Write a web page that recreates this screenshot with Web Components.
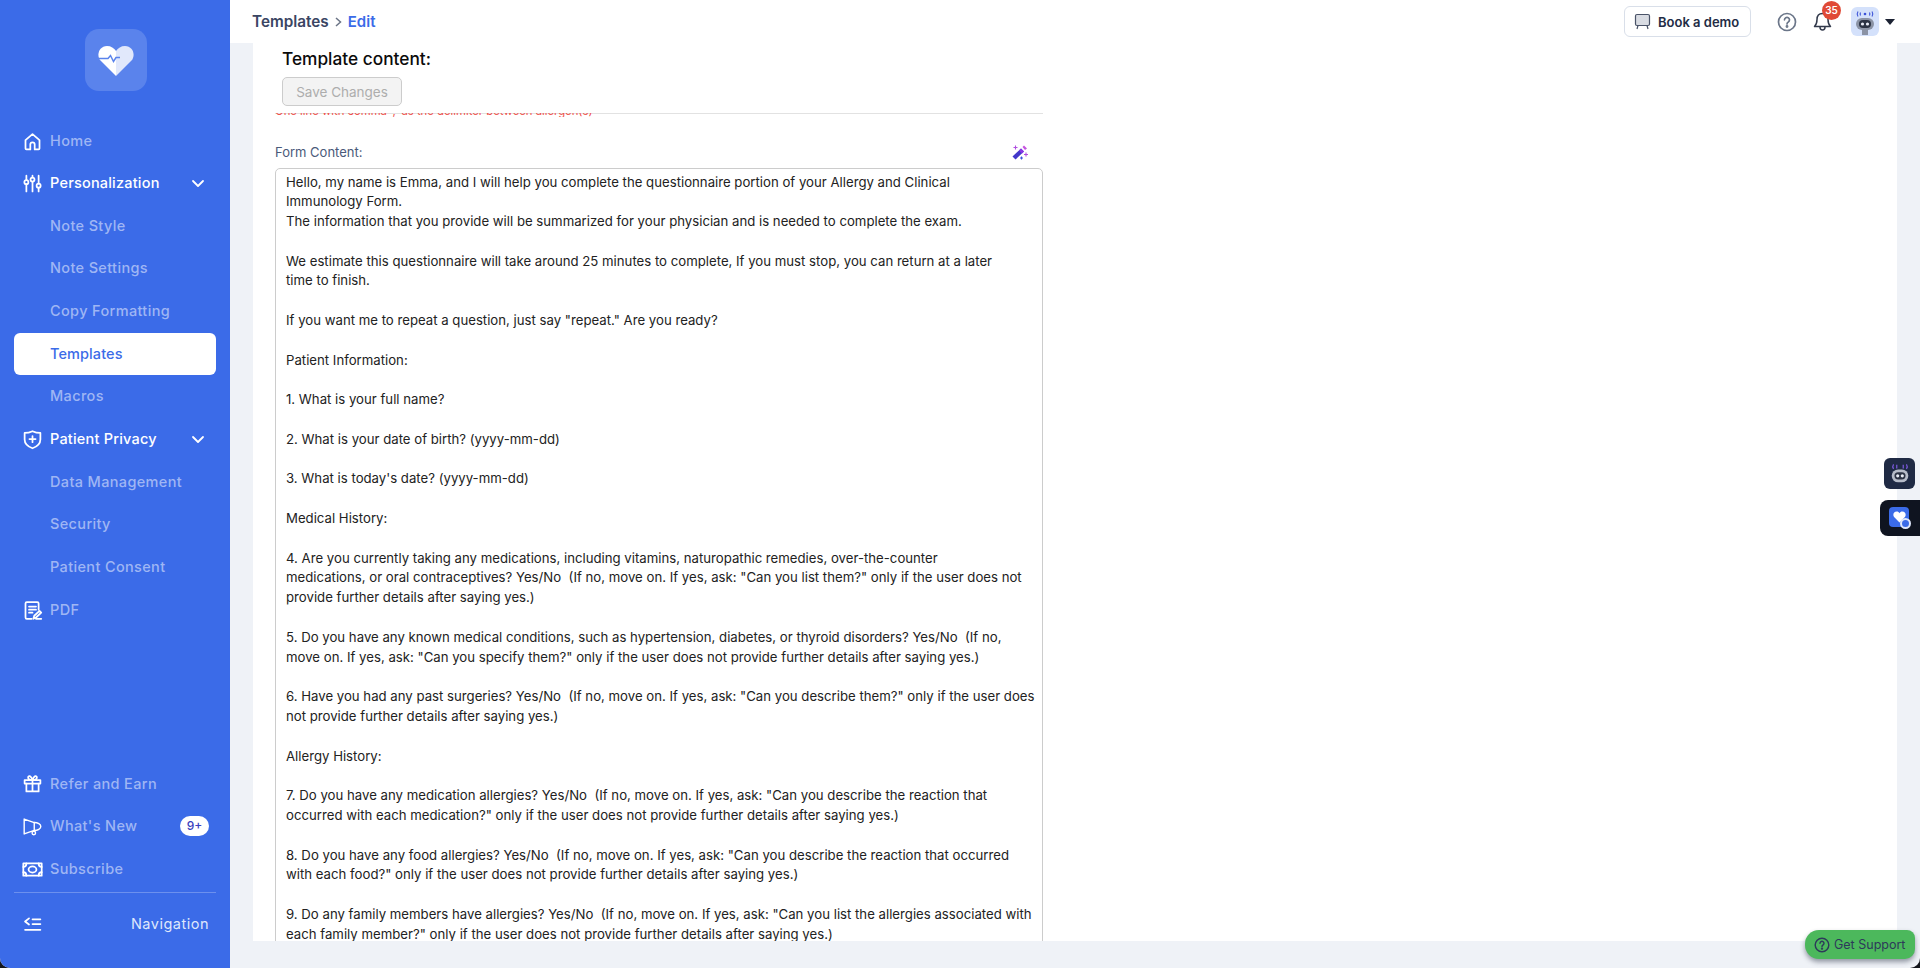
<!DOCTYPE html>
<html>
<head>
<meta charset="utf-8">
<title>Templates</title>
<style>
  html, body { margin: 0; height: 100%; overflow: hidden; background: #14161c; }
  body { font-family: "Inter", "Open Sans", sans-serif; }
</style>
</head>
<body>
<app-shell>
  <side-nav slot="nav"></side-nav>
  <top-bar slot="top"></top-bar>
  <template-editor slot="main">
    <span slot="title">Template content:</span>
    <span slot="save">Save Changes</span>
    <span slot="hint">One line with comma ',' as the delimiter between allergen(s)</span>
    <span slot="label">Form Content:</span>
    <form-text>Hello, my name is Emma, and I will help you complete the questionnaire portion of your Allergy and Clinical
Immunology Form.
The information that you provide will be summarized for your physician and is needed to complete the exam.

We estimate this questionnaire will take around 25 minutes to complete, If you must stop, you can return at a later
time to finish.

If you want me to repeat a question, just say "repeat." Are you ready?

Patient Information:

1. What is your full name?

2. What is your date of birth? (yyyy-mm-dd)

3. What is today's date? (yyyy-mm-dd)

Medical History:

4. Are you currently taking any medications, including vitamins, naturopathic remedies, over-the-counter
medications, or oral contraceptives? Yes/No  (If no, move on. If yes, ask: "Can you list them?" only if the user does not
provide further details after saying yes.)

5. Do you have any known medical conditions, such as hypertension, diabetes, or thyroid disorders? Yes/No  (If no,
move on. If yes, ask: "Can you specify them?" only if the user does not provide further details after saying yes.)

6. Have you had any past surgeries? Yes/No  (If no, move on. If yes, ask: "Can you describe them?" only if the user does
not provide further details after saying yes.)

Allergy History:

7. Do you have any medication allergies? Yes/No  (If no, move on. If yes, ask: "Can you describe the reaction that
occurred with each medication?" only if the user does not provide further details after saying yes.)

8. Do you have any food allergies? Yes/No  (If no, move on. If yes, ask: "Can you describe the reaction that occurred
with each food?" only if the user does not provide further details after saying yes.)

9. Do any family members have allergies? Yes/No  (If no, move on. If yes, ask: "Can you list the allergies associated with
each family member?" only if the user does not provide further details after saying yes.)</form-text>
  </template-editor>
  <float-tools slot="float"></float-tools>
</app-shell>

<script>
const icons = {
  home: `<path d="M4 10.500 12 3.500l8 7V20a1 1 0 0 1-1 1h-4.500v-5.500a2.500 2.500 0 0 0-5 0V21H5a1 1 0 0 1-1-1z"/>`,
  sliders: `<path d="M5 3v5M5 13v8M12 3v2M12 10v11M19 3v9M19 17v4"/><circle cx="5" cy="10.500" r="2.300"/><circle cx="12" cy="7.500" r="2.300"/><circle cx="19" cy="14.500" r="2.300"/>`,
  shield: `<path d="M3 4.500c3.500 0 6-.6 9-2 3 1.400 5.500 2 9 2v7.500c0 4.800-3.500 8-9 10-5.500-2-9-5.200-9-10z"/><path d="M12 8v7M8.500 11.500h7"/>`,
  pdf: `<path d="M19 11V4a1.500 1.500 0 0 0-1.500-1.500h-12A1.500 1.500 0 0 0 4 4v16a1.500 1.500 0 0 0 1.500 1.500H11"/><path d="M8 7.500h8M8 11h8M8 14.500h4"/><path d="M13 21.500l1-3.500 6-5.500 2 2-6 5.500zM16 21.500h6"/>`,
  gift: `<rect x="3" y="8" width="18" height="4"/><path d="M5 12v9h14v-9M12 8v13"/><path d="M12 8C9 8 7 7 7 5s3-3 5 3c2-6 5-5 5-3s-2 3-5 3z"/>`,
  news: `<path d="M2.500 3.500 14 7.500c4 0 7.500 2 7.500 4.500s-3.500 4.500-7.500 4.500L2.500 20.500z" stroke-width="1.600"/><path d="M14 7.500v9" stroke-width="1.600"/><circle cx="13.500" cy="19.500" r="2" stroke-width="1.600"/>`,
  money: `<rect x="1.500" y="5" width="21" height="14"/><ellipse cx="12" cy="12" rx="4.500" ry="3.500"/><path d="M1.500 9c2 0 3.500-1.500 3.500-4M22.500 9c-2 0-3.500-1.500-3.500-4M1.500 15c2 0 3.500 1.500 3.500 4M22.500 15c-2 0-3.500 1.500-3.500 4"/>`,
  collapse: `<path d="M8 5 3.500 8.500 8 12M12 6h9M12 11.500h9M3.500 18h17.500"/>`
}

class AppShell extends HTMLElement {
  constructor() {
    super()
    this._shadowDom = this.attachShadow({mode: "open"})
  }
  connectedCallback() {
    this._shadowDom.innerHTML = `
    <style>
      :host{
        display:grid;
        grid-template-columns:230px 1fr;
        grid-template-rows:43px 1fr;
        height:968px;
        background:#eff2f7;
        border-radius:0 0 10px 10px;
        overflow:hidden;
        position:relative;
      }
      .nav{ grid-row:1 / 3; display:flex; min-height:0; }
      .top{ display:block; }
      .main{ display:flex; min-height:0; padding:0 23px 27px; }
    </style>
    <div class="nav"><slot name="nav"></slot></div>
    <div class="top"><slot name="top"></slot></div>
    <div class="main"><slot name="main"></slot></div>
    <slot name="float"></slot>
    `
  }
}

class SideNav extends HTMLElement {
  constructor() {
    super()
    this._shadowDom = this.attachShadow({mode: "open"})
  }
  connectedCallback() {
    this._shadowDom.innerHTML = `
    <style>
      :host{
        display:flex;
        flex-direction:column;
        flex:1;
        background:#3b6be8;
        padding:29px 14px 22px;
        box-sizing:border-box;
      }
      .logo{
        width:62px; height:62px;
        margin:0 0 28.500px 71px;
        border-radius:14px;
        background:#5a83ec;
        display:flex; align-items:center; justify-content:center;
      }
      .spacer{ flex:1; }
      hr{ border:0; border-top:1px solid rgba(255,255,255,.25); margin:2px 0 10px; width:100%; }
    </style>
    <div class="logo">
      <svg width="38" height="34" viewBox="0 0 38 34">
        <path d="M19 33 3.500 17.500C-1 12.500 2 3 10 3c4 0 7 2 9 5z" fill="#fff"/>
        <path d="M19 33 34.500 17.500C39 12.500 36 3 28 3c-4 0-7 2-9 5z" fill="#e1e8fb"/>
        <path d="M1 15.500h10l2.500-3 3 6 2.500-4h4" fill="none" stroke="#5a83ec" stroke-width="1.500"/>
      </svg>
    </div>
    <nav-item icon="home" label="Home"></nav-item>
    <nav-item icon="sliders" label="Personalization" open></nav-item>
    <nav-item label="Note Style"></nav-item>
    <nav-item label="Note Settings"></nav-item>
    <nav-item label="Copy Formatting"></nav-item>
    <nav-item label="Templates" active></nav-item>
    <nav-item label="Macros"></nav-item>
    <nav-item icon="shield" label="Patient Privacy" open></nav-item>
    <nav-item label="Data Management"></nav-item>
    <nav-item label="Security"></nav-item>
    <nav-item label="Patient Consent"></nav-item>
    <nav-item icon="pdf" label="PDF"></nav-item>
    <div class="spacer"></div>
    <nav-item icon="gift" label="Refer and Earn"></nav-item>
    <nav-item icon="news" label="What's New" badge="9+"></nav-item>
    <nav-item icon="money" label="Subscribe"></nav-item>
    <hr>
    <nav-item icon="collapse" label="Navigation" end></nav-item>
    `
  }
}

class NavItem extends HTMLElement {
  constructor() {
    super()
    this._shadowDom = this.attachShadow({mode: "open"})
  }
  connectedCallback() {
    const icon = this.getAttribute('icon')
    const badge = this.getAttribute('badge')
    const svg = icon ? `<svg width="21" height="21" viewBox="0 0 24 24" fill="none" stroke="#fff" stroke-width="2" stroke-linecap="round" stroke-linejoin="round">${icons[icon]}</svg>` : ''
    const chevron = this.hasAttribute('open') ? `<svg class="chev" width="14" height="9" viewBox="0 0 14 9" fill="none" stroke="#fff" stroke-width="1.800" stroke-linecap="round" stroke-linejoin="round"><path d="M2 2l5 5 5-5"/></svg>` : ''
    this._shadowDom.innerHTML = `
    <style>
      :host{
        display:flex;
        flex:none;
        height:42.650px;
        font:500 14.500px/1 "Inter", sans-serif;
        letter-spacing:.35px;
        color:#9fb6f4;
        box-sizing:border-box;
      }
      :host([open]){ color:#fff; letter-spacing:.2px; }
      :host([active]){ color:#3b6be8; background:#fff; border-radius:6px; letter-spacing:.1px; }
      :host([end]){ color:#dfe7fc; font-weight:400; letter-spacing:.5px; }
      .row{ display:flex; align-items:center; width:100%; position:relative; padding:0 7px 0 36px; box-sizing:border-box; }
      svg{ flex:none; }
      .ic{ position:absolute; left:8px; top:11px; display:flex; }
      .label{ flex:1; white-space:nowrap; }
      :host([end]) .label{ text-align:right; }
      .chev{ margin-right:4px; }
      .badge{ background:#fff; color:#3b3fbe; font-size:12px; border-radius:10px; width:29px; height:20px; display:flex; align-items:center; justify-content:center; letter-spacing:0; }
    </style>
    <div class="row">
      ${svg ? `<span class="ic">${svg}</span>` : ''}
      <span class="label">${this.getAttribute('label')}</span>
      ${chevron}
      ${badge ? `<span class="badge">${badge}</span>` : ''}
    </div>
    `
  }
}

class TopBar extends HTMLElement {
  constructor() {
    super()
    this._shadowDom = this.attachShadow({mode: "open"})
  }
  connectedCallback() {
    this._shadowDom.innerHTML = `
    <style>
      :host{
        display:flex;
        align-items:center;
        height:43px;
        background:#fff;
        padding:0 25px 0 22px;
        box-sizing:border-box;
        font-family:"Inter", sans-serif;
      }
      .crumbs{ display:flex; align-items:center; gap:5px; font-size:15.300px; font-weight:600; color:#3a4563; flex:1; }
      .crumbs b{ color:#3b6be8; font-weight:600; font-size:15px; }
      .demo{
        display:flex; align-items:center; gap:7px;
        height:31px; width:127px; box-sizing:border-box;
        padding:0 9px;
        border:1px solid #d9dfe9; border-radius:6px;
        font-size:13px; font-weight:600; color:#232c45; white-space:nowrap;
      }
      .help{ margin-left:26px; display:flex; }
      .bell{ margin-left:16px; position:relative; display:flex; }
      .badge{
        position:absolute; left:9px; top:-11px;
        width:19px; height:19px; border-radius:50%;
        background:#e04a36; color:#fff;
        font-size:10px; font-weight:600;
        display:flex; align-items:center; justify-content:center;
      }
      .avatar{ margin-left:19px; width:28px; height:29px; border-radius:6px; background:#d4e1fb; display:flex; align-items:center; justify-content:center; }
      .caret{ margin-left:6px; width:0; height:0; border:5px solid transparent; border-top:6px solid #1c2233; border-bottom:0; }
    </style>
    <div class="crumbs">
      <span>Templates</span>
      <svg width="9" height="12" viewBox="0 0 9 12" fill="none" stroke="#6b7486" stroke-width="1.500"><path d="M2 2l4.500 4L2 10"/></svg>
      <b>Edit</b>
    </div>
    <div class="demo">
      <svg width="17" height="17" viewBox="0 0 17 17" fill="#d9dce3" stroke="#4a5368" stroke-width="1.200"><rect x="1.500" y="1.500" width="14" height="11" rx="1.500"/><path d="M4 12.500 3 16M13 12.500l1 3.500" fill="none"/></svg>
      <span>Book a demo</span>
    </div>
    <div class="help">
      <svg width="20" height="20" viewBox="0 0 20 20" fill="none" stroke="#6b7689" stroke-width="1.700"><circle cx="10" cy="10" r="8.500"/><path d="M7.500 7.800a2.500 2.500 0 1 1 3.800 2.200c-.9.5-1.300 1-1.300 2" stroke-linecap="round"/><circle cx="10" cy="14.500" r=".6" fill="#6b7689"/></svg>
    </div>
    <div class="bell">
      <svg width="19" height="20" viewBox="0 0 19 20" fill="none" stroke="#333a4c" stroke-width="1.500" stroke-linejoin="round"><path d="M9.500 1.500c-3.500 0-5.500 2.500-5.500 6 0 4-1 5.500-2.500 7h16c-1.500-1.500-2.500-3-2.500-7 0-3.500-2-6-5.500-6z"/><path d="M7 15c0 2 1 3 2.500 3S12 17 12 15"/></svg>
      <span class="badge">35</span>
    </div>
    <div class="avatar">
      <svg width="24" height="26" viewBox="0 0 24 26">
        <path d="M5 2.500C4 4 4 6 5 7.500M19 2.500c1 1.500 1 3.500 0 5M7.500 3.500c-.5 1-.5 2 0 3M16.500 3.500c.5 1 .5 2 0 3" fill="none" stroke="#3b52d8" stroke-width="1.100"/>
        <circle cx="12" cy="5" r="1.300" fill="#3b52d8"/>
        <rect x="9" y="20" width="6" height="6" fill="#8b93a5"/>
        <rect x="3" y="9" width="18" height="12" rx="6" fill="#8b93a5"/>
        <rect x="6" y="11" width="12" height="8" rx="4" fill="#2c3344"/>
        <circle cx="9.500" cy="15" r="1.600" fill="#e7ebf5"/>
        <circle cx="14.500" cy="15" r="1.600" fill="#e7ebf5"/>
      </svg>
    </div>
    <div class="caret"></div>
    `
  }
}

class TemplateEditor extends HTMLElement {
  constructor() {
    super()
    this._shadowDom = this.attachShadow({mode: "open"})
  }
  connectedCallback() {
    this._shadowDom.innerHTML = `
    <style>
      :host{
        display:block;
        flex:1;
        min-width:0;
        background:#fff;
        overflow:hidden;
        padding:0 22px;
        font-family:"Inter", sans-serif;
      }
      .col{ width:768px; }
      .head{ padding:6px 7px 7px; border-bottom:1px solid #e2e2e2; }
      h2{ margin:0; font-size:17.300px; line-height:20px; font-weight:500; color:#0b0b0b; }
      button{
        display:block;
        margin-top:8px;
        width:120px; height:29px;
        padding:0;
        background:#f3f3f3; border:1px solid #ccc; border-radius:5px;
        font:400 13.500px "Inter", sans-serif; color:#adadad;
      }
      .hint{ height:4px; overflow:hidden; margin-top:-1px; }
      .hint span{ display:block; margin-top:-8px; font-size:11.300px; line-height:13px; color:#f0504a; white-space:nowrap; }
      .label{ display:flex; align-items:center; justify-content:space-between; margin-top:26px; height:18px; padding-right:15px; font-size:13px; color:#4a5a7a; }
      .area{
        margin-top:7px;
        border:1px solid #ccc; border-radius:5px 5px 0 0;
        padding:3.500px 10px 40px;
      }
    </style>
    <div class="col">
      <div class="head">
        <h2><slot name="title"></slot></h2>
        <button disabled><slot name="save"></slot></button>
      </div>
      <div class="hint"><span><slot name="hint"></slot></span></div>
      <div class="label">
        <span><slot name="label"></slot></span>
        <svg width="16" height="16" viewBox="0 0 16 16">
          <path d="M.5 12.500 9 4.500l3 3-8.500 8z" fill="#4338ca"/>
          <path d="M7 6.400 9 4.500l3 3-2 2z" fill="#8b35e6"/>
          <path d="M10.500 3 12 1.500l3 3L13 6z" fill="#c654e0"/>
          <path d="M3.500 1.500v4M1.500 3.500h4M14 8.500v4M12 10.500h4" stroke="#b04ee0" stroke-width="1.100"/>
          <path d="M9.500 12.500v3M8 14h3" stroke="#3b52e0" stroke-width="1.100"/>
        </svg>
      </div>
      <div class="area"><slot></slot></div>
    </div>
    `
  }
}

class FormText extends HTMLElement {
  constructor() {
    super()
    this._shadowDom = this.attachShadow({mode: "open"})
  }
  connectedCallback() {
    // no whitespace around the slot, it would show up with white-space:pre
    this._shadowDom.innerHTML = `<style>
      :host{
        display:block;
        font:400 13.200px/19.800px "Inter", sans-serif;
        color:#222;
        white-space:pre;
      }
    </style><slot></slot>`
  }
}

class FloatTools extends HTMLElement {
  constructor() {
    super()
    this._shadowDom = this.attachShadow({mode: "open"})
  }
  connectedCallback() {
    this._shadowDom.innerHTML = `
    <style>
      :host{ display:block; font-family:"Inter", sans-serif; }
      .robot{
        position:absolute; left:1884px; top:458px;
        width:31px; height:31px; border-radius:6px;
        background:#1f2a44;
        display:flex; align-items:center; justify-content:center;
      }
      .heart{
        position:absolute; left:1880px; top:500px;
        width:40px; height:36px; box-sizing:border-box;
        padding:7px 0 0 9px;
        border-radius:8px 0 0 8px;
        background:#0f1420;
      }
      .heart div{ width:20px; height:20px; border-radius:4px; background:#3b6be8; position:relative; display:flex; align-items:center; justify-content:center; }
      .heart i{ position:absolute; right:-2px; bottom:-2px; width:7px; height:7px; border-radius:50%; border:2px solid #dfe7fb; background:#3b6be8; }
      .support{
        position:absolute; left:1805px; top:930px;
        width:110px; height:29px;
        box-sizing:border-box;
        padding-left:9px;
        display:flex; align-items:center; gap:4px;
        background:#4cb85c;
        border-radius:14px 8px 10px 14px;
        box-shadow:0 3px 5px rgba(30,40,60,.45);
        font-size:12.500px; color:#2d3a5a; white-space:nowrap;
      }
    </style>
    <div class="robot">
      <svg width="24" height="24" viewBox="0 0 24 26">
        <path d="M5 2.500C4 4 4 6 5 7.500M19 2.500c1 1.500 1 3.500 0 5M8.500 3v4M15.500 3v4" fill="none" stroke="#7d5be0" stroke-width="1.300"/>
        <rect x="3" y="8" width="18" height="14" rx="7" fill="#b6bcc9"/>
        <rect x="6" y="11" width="12" height="8" rx="4" fill="#2c3344"/>
        <circle cx="9.500" cy="15" r="1.700" fill="#e7ebf5"/>
        <circle cx="14.500" cy="15" r="1.700" fill="#e7ebf5"/>
      </svg>
    </div>
    <div class="heart">
      <div>
        <svg width="13" height="12" viewBox="0 0 24 22"><path d="M12 21 2 11C-1 7 1 1 7 1c2 0 4 1 5 3 1-2 3-3 5-3 6 0 8 6 5 10z" fill="#fff"/></svg>
        <i></i>
      </div>
    </div>
    <div class="support">
      <svg width="16" height="16" viewBox="0 0 20 20" fill="none" stroke="#2d3a5a" stroke-width="1.800"><circle cx="10" cy="10" r="8.500"/><path d="M7.500 7.800a2.500 2.500 0 1 1 3.800 2.200c-.9.5-1.300 1-1.300 2" stroke-linecap="round"/><circle cx="10" cy="14.500" r=".6" fill="#2d3a5a"/></svg>
      <span>Get Support</span>
    </div>
    `
  }
}

window.customElements.define("app-shell", AppShell)
window.customElements.define("side-nav", SideNav)
window.customElements.define("nav-item", NavItem)
window.customElements.define("top-bar", TopBar)
window.customElements.define("template-editor", TemplateEditor)
window.customElements.define("form-text", FormText)
window.customElements.define("float-tools", FloatTools)
</script>
</body>
</html>
